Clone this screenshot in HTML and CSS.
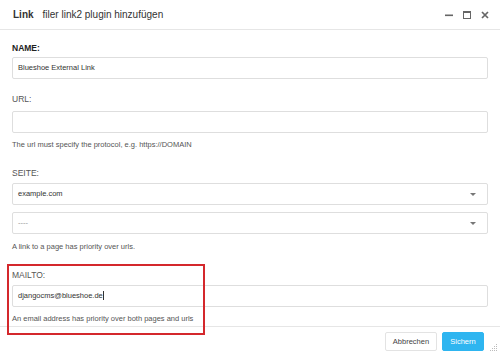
FILE: index.html
```html
<!DOCTYPE html>
<html>
<head>
<meta charset="utf-8">
<link rel="stylesheet" href="styles.css">
</head>
<body>
<div class="dialog">
  <div class="header">
    <div class="title"><b>Link</b><span class="sub">filer link2 plugin hinzufügen</span></div>
    <div class="controls">
      <svg class="ic" width="10" height="10" viewBox="0 0 10 10"><rect x="1" y="4.5" width="8" height="1.6" fill="#666"/></svg>
      <svg class="ic" width="10" height="10" viewBox="0 0 10 10"><rect x="1.5" y="1.5" width="7" height="7" fill="none" stroke="#666" stroke-width="1"/><rect x="1" y="1" width="8" height="2" fill="#666"/></svg>
      <svg class="ic" width="10" height="10" viewBox="0 0 10 10"><path d="M2 2 L8 8 M8 2 L2 8" stroke="#666" stroke-width="1.7"/></svg>
    </div>
  </div>
  <div class="content">
    <div class="field f-name">
      <div class="label strong">NAME:</div>
      <div class="input">Blueshoe External Link</div>
    </div>
    <div class="field f-url">
      <div class="label">URL:</div>
      <div class="input"></div>
      <div class="help">The url must specify the protocol, e.g. https://DOMAIN</div>
    </div>
    <div class="field f-seite">
      <div class="label">SEITE:</div>
      <div class="input select">example.com<span class="arrow"></span></div>
      <div class="input select second"><span class="dash">----</span><span class="arrow"></span></div>
      <div class="help">A link to a page has priority over urls.</div>
    </div>
    <div class="field f-mail">
      <div class="label">MAILTO:</div>
      <div class="input">djangocms@blueshoe.de<span class="caret"></span></div>
      <div class="help">An email address has priority over both pages and urls</div>
    </div>
  </div>
  <div class="footer">
    <button class="btn">Abbrechen</button>
    <button class="btn primary">Sichern</button>
    <svg class="grip" width="8" height="8" viewBox="0 0 8 8"><g fill="#bbb"><rect x="6" y="0" width="1" height="1"/><rect x="4" y="2" width="1" height="1"/><rect x="6" y="2" width="1" height="1"/><rect x="2" y="4" width="1" height="1"/><rect x="4" y="4" width="1" height="1"/><rect x="6" y="4" width="1" height="1"/><rect x="0" y="6" width="1" height="1"/><rect x="2" y="6" width="1" height="1"/><rect x="4" y="6" width="1" height="1"/><rect x="6" y="6" width="1" height="1"/></g></svg>
  </div>
  <div class="highlight"></div>
</div>
</body>
</html>
```
FILE: styles.css
```css
* { box-sizing: border-box; }
html, body { margin: 0; padding: 0; background: #fff; }
body {
  font-family: "Liberation Sans", Arial, Helvetica, sans-serif;
  color: #333;
  width: 500px;
  height: 356px;
  overflow: hidden;
}
.dialog { position: relative; width: 500px; height: 356px; }
.header {
  height: 30px;
  border-bottom: 1px solid #e6e6e6;
  display: flex;
  align-items: center;
  justify-content: space-between;
  padding: 0 10px 0 13px;
}
.title { font-size: 10px; color: #333; }
.title b { font-weight: bold; color: #333; }
.title .sub { margin-left: 9px; }
.controls { display: flex; gap: 8px; align-items: center; }
.ic { display: block; }
.content { padding: 12px 12px 0 12px; }
.label {
  font-size: 8.5px;
  line-height: 12px;
  color: #555;
  margin-bottom: 4px;
}
.label.strong { font-weight: bold; color: #222; font-size: 8.5px; margin-bottom: 3px; }
.input {
  position: relative;
  height: 22px;
  border: 1px solid #dedede;
  border-radius: 2px;
  font-size: 7.5px;
  line-height: 20px;
  padding: 0 5px;
  color: #333;
  background: #fff;
}
.f-url .label { margin-bottom: 6px; }
.field { margin-bottom: 14px; }
.f-url { margin-bottom: 16px; }
.f-seite { margin-bottom: 16px; }
.select.second { margin-top: 7px; }
.dash { color: #999; }
.arrow {
  position: absolute;
  right: 11px;
  top: 9px;
  width: 0; height: 0;
  border-left: 3px solid transparent;
  border-right: 3px solid transparent;
  border-top: 3px solid #777;
}
.caret {
  display: inline-block;
  width: 1px;
  height: 9px;
  background: #333;
  vertical-align: -2px;
}
.help {
  font-size: 7.5px;
  line-height: 12px;
  color: #555;
  margin-top: 7px;
}
.f-url .help { margin-top: 6px; }
.f-mail .help { margin-top: 6px; }
.footer {
  position: absolute;
  left: 0; right: 0; top: 326px;
  height: 30px;
  border-top: 1px solid #e6e6e6;
  display: flex;
  justify-content: flex-end;
  align-items: flex-start;
  padding: 5px 16px 0 0;
  gap: 5px;
}
.btn {
  height: 19px;
  font-family: inherit;
  font-size: 7.5px;
  border-radius: 2px;
  border: 1px solid #e3e3e3;
  background: #fff;
  color: #444;
  padding: 0;
  width: 52px;
}
.btn.primary {
  background: #2eb5f0;
  border-color: #2eb5f0;
  color: #fff;
  width: 42px;
}
.grip { position: absolute; right: 2px; bottom: 4px; }
.highlight {
  position: absolute;
  left: 7px;
  top: 264px;
  width: 198px;
  height: 71px;
  border: 2px solid #d4282c;
  pointer-events: none;
}
```
